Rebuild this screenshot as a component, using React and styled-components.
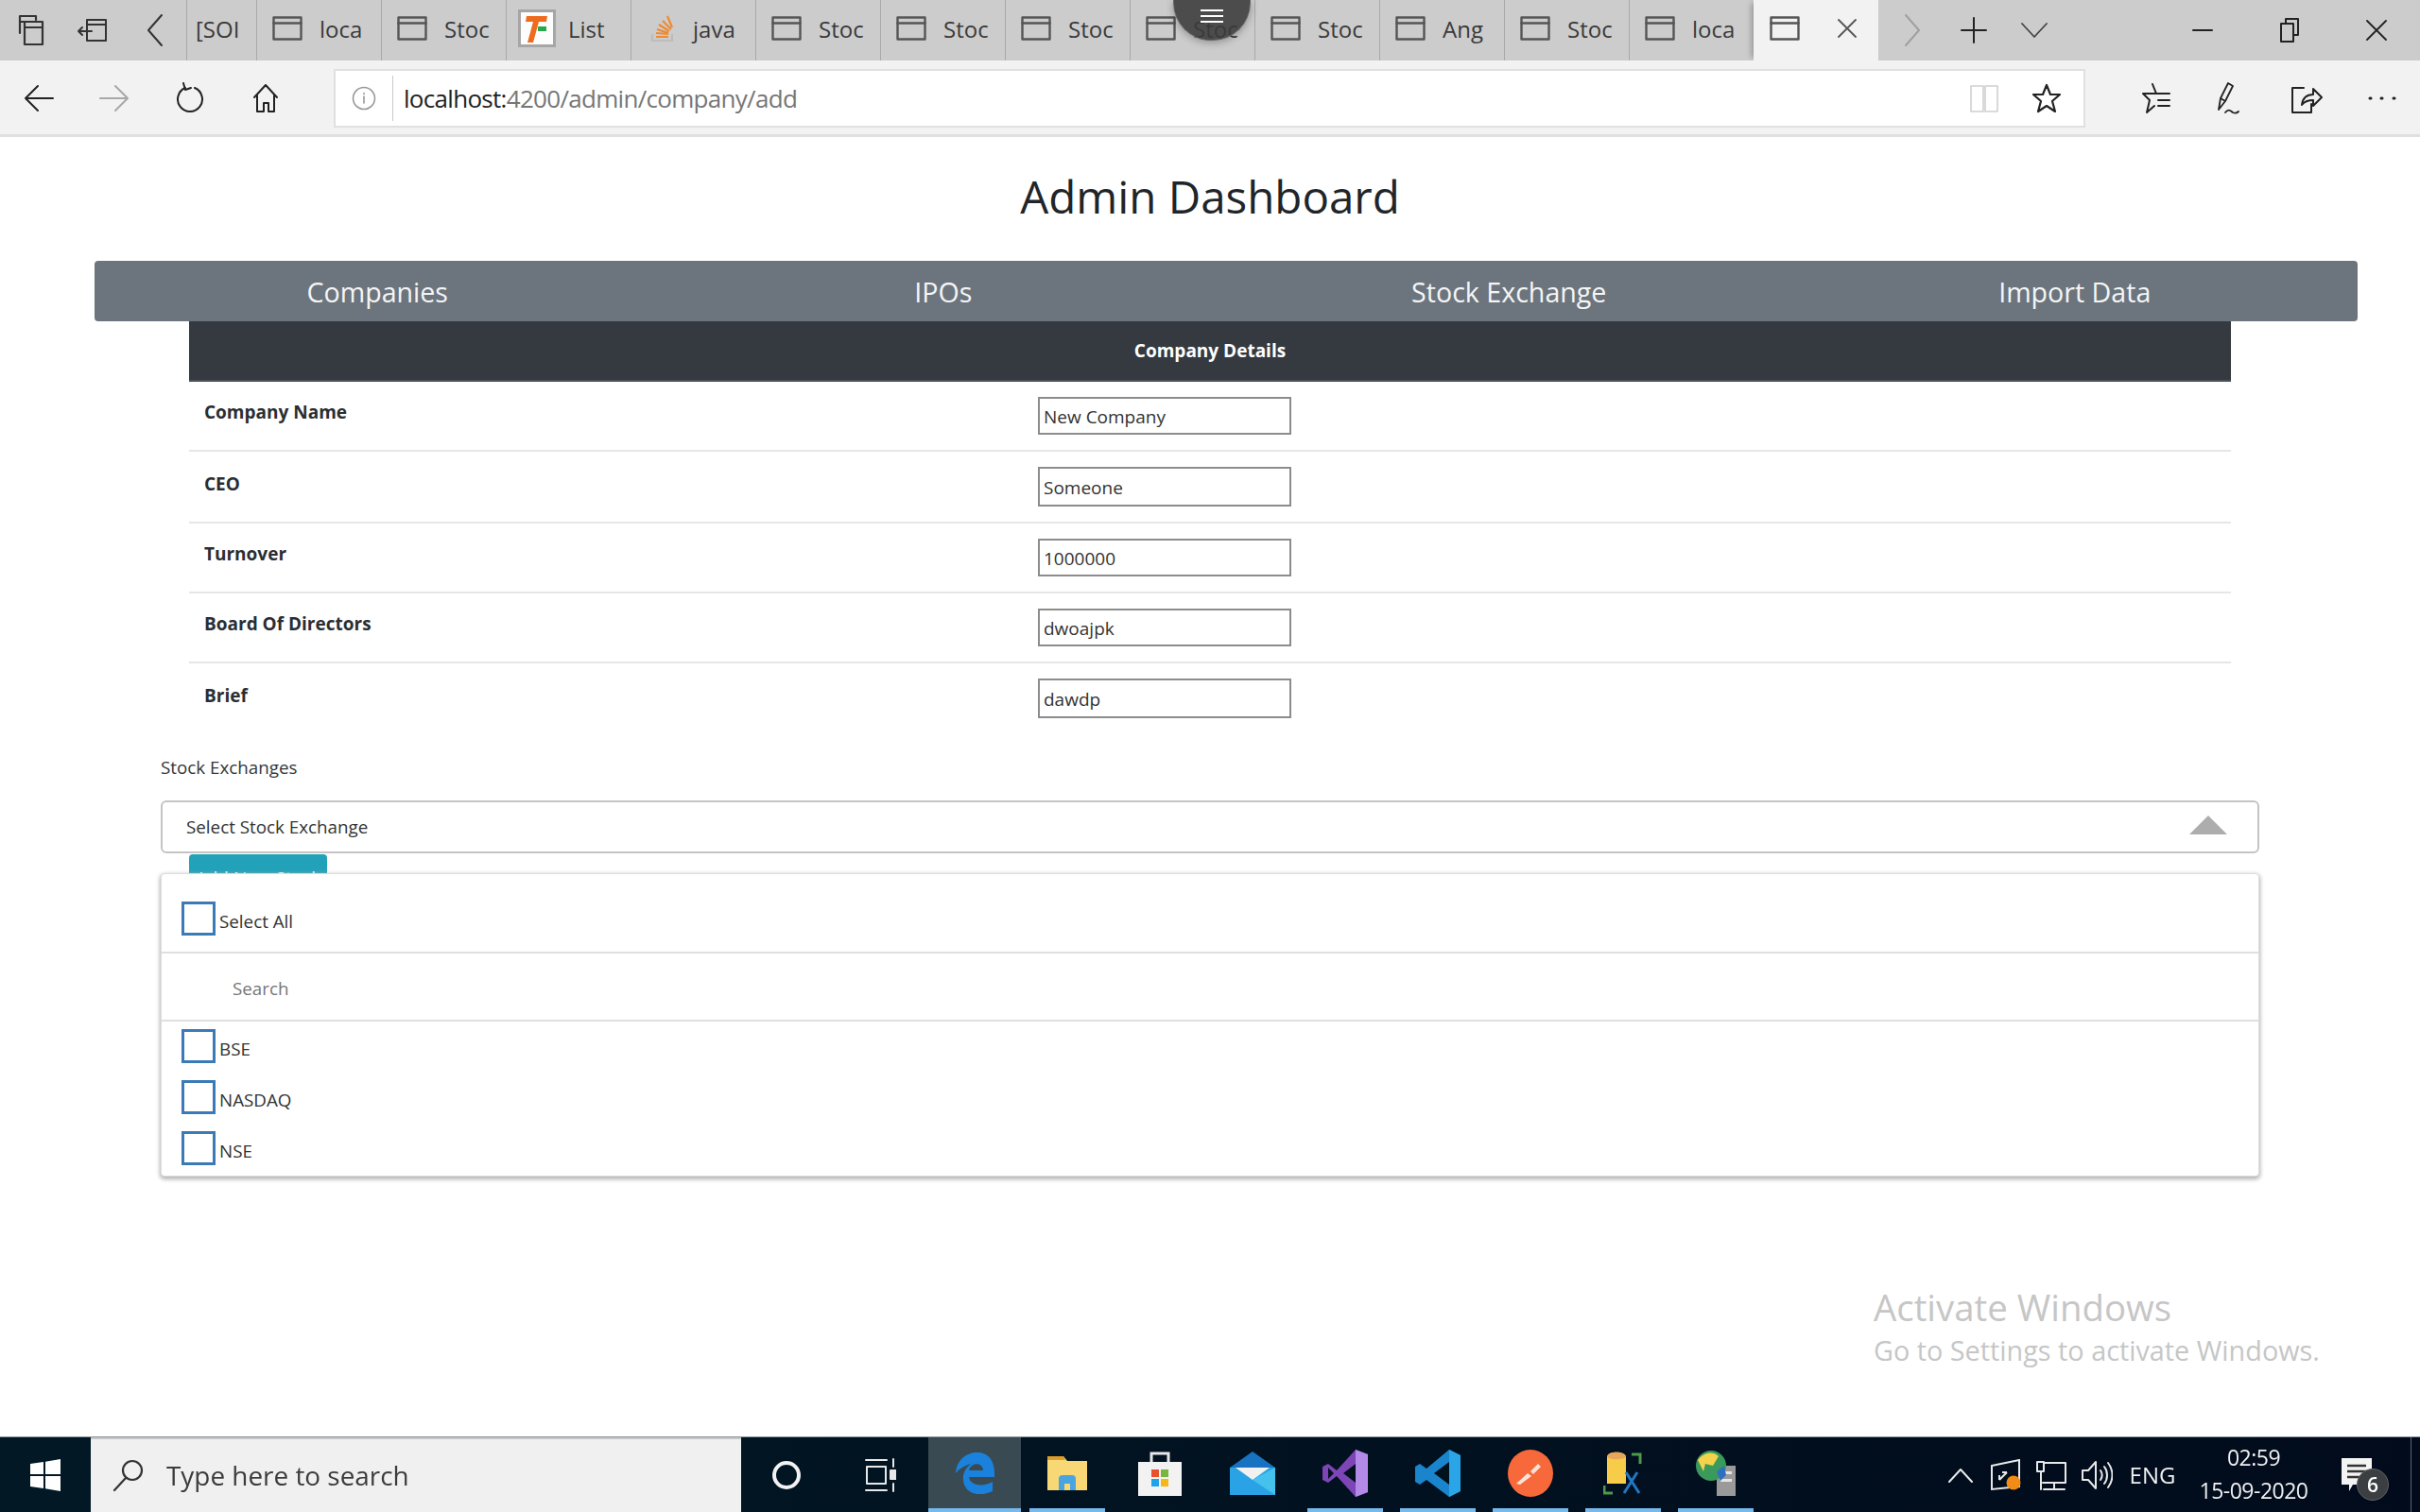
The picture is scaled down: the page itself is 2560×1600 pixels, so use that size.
import React from "react";
import styled, { createGlobalStyle } from "styled-components";

const GlobalStyle = createGlobalStyle`
  html, body {
    margin: 0;
    padding: 0;
    background: #fff;
    font-family: "Open Sans", "Liberation Sans", sans-serif;
  }
  * { box-sizing: border-box; }
`;

const Frame = styled.div`
  position: relative;
  width: 2560px;
  height: 1600px;
  display: flex;
  flex-direction: column;
  overflow: hidden;
  filter: blur(0.6px);
`;

/* browser chrome */
const TabBar = styled.div`
  height: 64px;
  flex: none;
  display: flex;
  background: #ccc;
  color: #333;
`;

const Slot = styled.div`
  width: ${(p) => p.$w}px;
  flex: none;
  display: flex;
  align-items: center;
  justify-content: center;
  color: ${(p) => p.$color || "inherit"};
`;

const Tab = styled.div`
  width: ${(p) => p.$w || 132}px;
  flex: none;
  display: flex;
  align-items: center;
  gap: ${(p) => p.$gap ?? 18}px;
  padding-left: ${(p) => p.$pad ?? 16}px;
  padding-bottom: 4px;
  border-left: 1px solid #a9a9a9;
  font-size: 24px;
  color: #3a3a3a;
  overflow: hidden;
`;

const ActiveTab = styled(Tab)`
  background: #f2f2f2;
  border-left: none;
  box-shadow: -5px 0 6px -3px rgba(0, 0, 0, 0.28);
`;

const TabSpacer = styled.div`
  flex: 1;
`;

const Toolbar = styled.div`
  height: 81px;
  flex: none;
  display: flex;
  align-items: center;
  padding: 2px 0 0 1px;
  background: #f2f2f2;
  border-bottom: 3px solid #e0e0e0;
  color: #2b2b2b;
`;

const AddressBar = styled.div`
  width: 1854px;
  height: 62px;
  margin-left: 32px;
  margin-right: 34px;
  display: flex;
  align-items: center;
  padding-right: 6px;
  background: #fff;
  border: 2px solid #e0e0e0;
  font-size: 26px;
  letter-spacing: -0.7px;
`;

const InfoDivider = styled.div`
  width: 1px;
  height: 48px;
  background: #c9c9c9;
  margin-right: 11px;
`;

const UrlHost = styled.span`
  color: #222;
`;

const UrlPath = styled.span`
  flex: 1;
  color: #767676;
`;

/* page */
const Page = styled.main`
  position: relative;
  flex: 1;
  min-height: 0;
  background: #fff;
  color: #212529;
`;

const Title = styled.h1`
  margin: 0 0 38px;
  padding-top: 33px;
  font-size: 47.5px;
  line-height: 60px;
  font-weight: 400;
  text-align: center;
`;

const NavBar = styled.nav`
  width: 2394px;
  height: 64px;
  margin-left: 100px;
  display: grid;
  grid-template-columns: repeat(4, 1fr);
  align-items: center;
  background: #6c757d;
  border-radius: 4px;
`;

const NavItem = styled.a`
  font-size: 28.6px;
  text-align: center;
  color: #f4f5f6;
`;

const DetailsTable = styled.section`
  width: 2160px;
  margin-left: 200px;
`;

const DetailsHead = styled.div`
  height: 64px;
  display: flex;
  align-items: center;
  justify-content: center;
  background: #343a40;
  border-bottom: 2px solid #4c5259;
  font-size: 19px;
  font-weight: 700;
  color: #fff;
`;

const DetailsRow = styled.div`
  height: ${(p) => p.$h}px;
  display: grid;
  grid-template-columns: 898px 1fr;
  padding-top: 16px;
  border-bottom: ${(p) => (p.$last ? "none" : "2px solid #e6e6e6")};
`;

const RowLabel = styled.div`
  padding-left: 16px;
  padding-top: ${(p) => p.$nudge || 0}px;
  font-size: 19px;
  line-height: 32px;
  font-weight: 700;
  color: #2a2e33;
`;

const TextField = styled.input`
  width: 268px;
  height: ${(p) => p.$h}px;
  padding: 2px 4px 0;
  background: #fff;
  border: 2px solid #8c8c8c;
  outline: none;
  font-family: inherit;
  font-size: 19px;
  color: #333;
`;

const ExchangeSection = styled.section`
  width: 2220px;
  margin: 19px 0 0 170px;
`;

const FieldLabel = styled.div`
  font-size: 18.8px;
  line-height: 26px;
  color: #33383c;
  margin-bottom: 22px;
`;

const SelectWrap = styled.div`
  position: relative;
`;

const SelectBox = styled.div`
  height: 56px;
  display: flex;
  align-items: center;
  justify-content: space-between;
  padding: 0 32px 0 25px;
  border: 2px solid #c4c4c4;
  border-radius: 6px;
  font-size: 18.8px;
  color: #333;
`;

const CaretUp = styled.span`
  width: 0;
  height: 0;
  border-left: 20px solid transparent;
  border-right: 20px solid transparent;
  border-bottom: 20px solid #adadad;
  margin-top: -4px;
`;

const AddStockButton = styled.button`
  display: block;
  width: 146px;
  height: 50px;
  margin: 1px 0 0 30px;
  padding: 0;
  border: none;
  border-radius: 4px;
  background: #22a2b8;
  color: #fff;
  font-family: inherit;
  font-size: 19px;
`;

const Dropdown = styled.div`
  position: absolute;
  top: 77px;
  left: 0;
  right: 0;
  height: 321px;
  background: #fff;
  border: 1px solid #dedede;
  border-radius: 4px;
  box-shadow: 0 2px 4px 1px #b4b4b4;
  font-size: 18.8px;
  color: #333;
`;

const SelectAllRow = styled.div`
  height: 84px;
  display: flex;
  align-items: flex-start;
  gap: 4px;
  padding: 29px 0 0 21px;
  border-bottom: 2px solid #dfdfdf;
`;

const SearchRow = styled.div`
  height: 72px;
  display: flex;
  align-items: center;
  padding: 3px 0 0 75px;
  border-bottom: 2px solid #dfdfdf;
  color: #777;
`;

const OptionList = styled.div`
  padding: 8px 0 0 21px;
`;

const OptionRow = styled.div`
  height: 54px;
  display: flex;
  align-items: flex-start;
  gap: 4px;
`;

const CheckBox = styled.span`
  width: 36px;
  height: 36px;
  flex: none;
  border: 3px solid #3b7ab5;
`;

const OptionText = styled.span`
  line-height: 36px;
  padding-top: 3px;
`;

const Watermark = styled.div`
  position: absolute;
  left: 1982px;
  top: 1210px;
  color: #c6c6c6;
  pointer-events: none;
`;

const WatermarkTitle = styled.div`
  font-size: 38.4px;
  line-height: 56px;
`;

const WatermarkHint = styled.div`
  font-size: 28.8px;
  line-height: 36px;
`;

/* taskbar */
const Taskbar = styled.footer`
  height: 80px;
  flex: none;
  display: flex;
  align-items: stretch;
  background: linear-gradient(90deg, #021925, #010b1c);
  border-top: 1px solid #8a9399;
  color: #f0f0f0;
`;

const SearchBox = styled.div`
  width: 688px;
  flex: none;
  display: flex;
  align-items: center;
  gap: 22px;
  padding-left: 22px;
  padding-bottom: 2px;
  background: #f0f0f0;
  border-top: 2px solid #c8c8c8;
  color: #3c3c3c;
  font-size: 27.9px;
`;

const AppTile = styled.div`
  position: relative;
  width: ${(p) => p.$w || 98}px;
  flex: none;
  display: flex;
  align-items: center;
  justify-content: center;
  padding-bottom: 3px;
  background: ${(p) => (p.$active ? "#3a4a52" : "transparent")};
  &::after {
    content: "";
    display: ${(p) => (p.$open ? "block" : "none")};
    position: absolute;
    bottom: 0;
    left: ${(p) => (p.$active ? 0 : 9)}px;
    right: ${(p) => (p.$active ? 0 : 9)}px;
    height: 4px;
    background: #76b9ed;
  }
`;

const Tray = styled.div`
  margin-left: auto;
  display: flex;
  align-items: stretch;
  width: 510px;
  font-size: 24px;
`;

const Clock = styled.div`
  width: 144px;
  display: flex;
  flex-direction: column;
  align-items: center;
  justify-content: center;
  gap: 4px;
  padding-bottom: 2px;
  font-size: 23px;
  line-height: 31px;
  letter-spacing: -0.5px;
`;

const NotifySlot = styled.div`
  position: relative;
  width: 74px;
  display: flex;
  align-items: center;
  justify-content: center;
`;

const NotifyBadge = styled.span`
  position: absolute;
  left: 37px;
  top: 33px;
  width: 34px;
  height: 34px;
  display: flex;
  align-items: center;
  justify-content: center;
  border-radius: 50%;
  background: #3c3f42;
  border: 1px solid #5f6265;
  color: #fff;
  font-size: 21px;
  font-weight: 600;
`;

const ShowDesktop = styled.div`
  width: 10px;
  margin-left: 20px;
  border-left: 1px solid #5a6670;
`;

const ScreenHandle = styled.div`
  position: absolute;
  top: 0;
  left: 1241px;
  width: 82px;
  height: 43px;
  display: flex;
  flex-direction: column;
  align-items: center;
  justify-content: center;
  gap: 4px;
  padding-bottom: 8px;
  background: rgba(58, 58, 58, 0.88);
  border: 1px solid #666;
  border-top: none;
  border-radius: 0 0 40px 40px;
  box-shadow: 0 2px 8px rgba(0, 0, 0, 0.3);
`;

const HandleLine = styled.span`
  width: 24px;
  height: 2px;
  background: #fff;
`;

const Icon = ({ w = 32, h = 32, sw = 2, children, color }) => (
  <svg
    width={w}
    height={h}
    viewBox={`0 0 ${w} ${h}`}
    fill="none"
    stroke={color || "currentColor"}
    strokeWidth={sw}
    strokeLinecap="round"
    strokeLinejoin="round"
  >
    {children}
  </svg>
);

const TabPage = () => (
  <Icon w={32} h={26} sw={2.4} color="#555">
    <rect x="1.5" y="1.5" width="29" height="23" />
    <path d="M1.5 7.5h29" />
  </Icon>
);

const TabsAside = () => (
  <Icon w={30} h={34} sw={2.2} color="#333">
    <path d="M3 20V2h17v4M3 8h17" />
    <rect x="8" y="8" width="19" height="24" fill="#ccc" />
    <path d="M8 14h19" />
  </Icon>
);

const SetAside = () => (
  <Icon w={34} h={28} sw={2} color="#333">
    <rect x="11" y="3" width="20" height="22" />
    <path d="M11 8h20M2 15h14M6 11l-4 4 4 4" />
  </Icon>
);

const TinyChevron = ({ flip, color }) => (
  <Icon w={18} h={36} sw={2} color={color || "#333"}>
    <path d={flip ? "M2 2l14 16L2 34" : "M16 2L2 18l14 16"} />
  </Icon>
);

const CrossIcon = ({ size = 20, color = "#333" }) => (
  <Icon w={size} h={size} sw={1.8} color={color}>
    <path d={`M1 1L${size - 1} ${size - 1}M${size - 1} 1L1 ${size - 1}`} />
  </Icon>
);

const FaviconF = () => (
  <svg width="40" height="40" viewBox="0 0 40 40">
    <rect x="1.5" y="1.5" width="37" height="37" fill="#fdfdfd" stroke="#a6a6a6" strokeWidth="3" />
    <path d="M9 7h22l-1 6h-8l-6 22h-6l6-22H8z" fill="#ef6c1e" />
    <rect x="21" y="18" width="9" height="5" fill="#27a84a" />
  </svg>
);

const FaviconStack = () => (
  <svg width="26" height="30" viewBox="0 0 26 30" fill="none" strokeWidth="2.2">
    <path d="M2 21v7h21v-7" stroke="#bcbcbc" />
    <path d="M6 24h13M6 20l13 1M7 16l12 4M9 11l11 7M13 7l9 9M18 2l5 12" stroke="#ee8a33" />
  </svg>
);

const WinLogo = () => (
  <svg width="32" height="34" viewBox="0 0 32 34" fill="#fff">
    <path d="M0 5l14-2v13H0zM16 2.700L32 0v16H16zM0 18h14v13L0 29zM16 18h16v16l-16-2.700z" />
  </svg>
);

const EdgeLogo = () => (
  <svg width="48" height="48" viewBox="0 0 48 48">
    <path d="M4 24C5 10 15 2 27 2c11 0 18 8 18 22v4H18c1 9 15 11 25 5v10c-12 6-30 4-31-12-1-7 3-13 8-17-7 2-12 5-16 10zm14-3h15c0-9-13-9-15 0z" fill="#1a82dc" />
  </svg>
);

const FolderLogo = () => (
  <svg width="48" height="48" viewBox="0 0 48 48">
    <path d="M3 6h17l4 5h21v31H3z" fill="#f8d775" />
    <path d="M3 6h17l2 4H3z" fill="#dc9d2c" />
    <path d="M15 42V30a4 4 0 0 1 4-4h10a4 4 0 0 1 4 4v12h-6v-7h-6v7z" fill="#4aa4e0" />
  </svg>
);

const StoreLogo = () => (
  <svg width="48" height="48" viewBox="0 0 48 48">
    <path d="M15 12V3h18v9" fill="none" stroke="#e8e8e8" strokeWidth="3" />
    <rect x="1" y="12" width="46" height="36" fill="#f2f2f2" />
    <rect x="15" y="20" width="8" height="8" fill="#e9502e" />
    <rect x="25" y="20" width="8" height="8" fill="#79b640" />
    <rect x="15" y="30" width="8" height="8" fill="#1fa3e8" />
    <rect x="25" y="30" width="8" height="8" fill="#f9b618" />
  </svg>
);

const MailLogo = () => (
  <svg width="48" height="48" viewBox="0 0 48 48">
    <path d="M0 18L24 1l24 17v29H0z" fill="#1773c2" />
    <path d="M0 18h48v29H0z" fill="#2aa3e6" />
    <path d="M6 18h36L24 31z" fill="#f1f1f1" />
    <path d="M24 31l24-13v29z" fill="#45c1ee" />
  </svg>
);

const VsLogo = () => (
  <svg width="48" height="50" viewBox="0 0 48 50">
    <path d="M35 0l13 5v40l-13 5-20-22-9 7-6-3V18l6-3 9 7z" fill="#7d45b6" />
    <path d="M35 0l13 5v40l-13 5z" fill="#b48ae8" />
    <path d="M6 19v12l6-6zM22 25l13 10V15z" fill="#02121d" />
  </svg>
);

const VsCodeLogo = () => (
  <svg width="48" height="50" viewBox="0 0 48 50">
    <path d="M36 0l12 6v38l-12 6-24-18-7 5-5-3V18l5-3 7 5z" fill="#1a85cc" />
    <path d="M36 0l12 6v38l-12 6z" fill="#2aa6e8" />
    <path d="M20 25l16 12V13z" fill="#02121d" />
  </svg>
);

const PostmanLogo = () => (
  <svg width="48" height="50" viewBox="0 0 48 50">
    <ellipse cx="24" cy="25" rx="24" ry="25" fill="#f7693a" />
    <path d="M9 36l12-11 4 3-12 9zM24 23l8-8 3 3-8 8z" fill="#fbe3d8" />
  </svg>
);

const DbToolLogo = () => (
  <svg width="42" height="46" viewBox="0 0 42 46" fill="none">
    <path d="M4 6c0-7 20-7 20 0v28H4z" fill="#f6cc48" />
    <path d="M4 6c0-7 20-7 20 0-5 3-15 3-20 0z" fill="#e8a65a" />
    <path d="M30 3h9v10M1 36v8h9" stroke="#4c9a4a" strokeWidth="3" />
    <path d="M22 44l14-22M38 44L24 22" stroke="#1f78c4" strokeWidth="3" />
  </svg>
);

const ServerLogo = () => (
  <svg width="46" height="48" viewBox="0 0 46 48">
    <rect x="24" y="16" width="20" height="32" fill="#9a9a9a" />
    <rect x="28" y="22" width="12" height="3" fill="#e5e5e5" />
    <rect x="28" y="30" width="12" height="3" fill="#e5e5e5" />
    <circle cx="18" cy="16" r="16" fill="#3a9a5c" />
    <path d="M4 10c6-8 16-10 22-4l-6 10-8-2-2 8z" fill="#f3d24c" />
    <path d="M24 22l8-6 2 10-6 6z" fill="#2f6fc2" />
  </svg>
);

const tabs = [
  { title: "loca" },
  { title: "Stoc" },
  { title: "List", icon: <FaviconF />, gap: 13, pad: 12 },
  { title: "java", icon: <FaviconStack />, gap: 19, pad: 20 },
  { title: "Stoc" },
  { title: "Stoc" },
  { title: "Stoc" },
  { title: "Stoc" },
  { title: "Stoc" },
  { title: "Ang" },
  { title: "Stoc" },
  { title: "loca" },
];

const fields = [
  { label: "Company Name", value: "New Company", h: 74, inputH: 40 },
  { label: "CEO", value: "Someone", h: 76, inputH: 42, nudge: 2 },
  { label: "Turnover", value: "1000000", h: 74, inputH: 40 },
  { label: "Board Of Directors", value: "dwoajpk", h: 74, inputH: 40 },
  { label: "Brief", value: "dawdp", h: 78, inputH: 42, nudge: 2, last: true },
];

const navItems = ["Companies", "IPOs", "Stock Exchange", "Import Data"];
const exchanges = ["BSE", "NASDAQ", "NSE"];

const apps = [
  { key: "edge", logo: <EdgeLogo />, open: true, active: true },
  { key: "folder", logo: <FolderLogo />, open: true },
  { key: "store", logo: <StoreLogo /> },
  { key: "mail", logo: <MailLogo /> },
  { key: "vs", logo: <VsLogo />, open: true },
  { key: "vscode", logo: <VsCodeLogo />, open: true },
  { key: "postman", logo: <PostmanLogo />, open: true },
  { key: "db", logo: <DbToolLogo />, open: true },
  { key: "server", logo: <ServerLogo />, open: true },
];

function App() {
  return (
    <Frame>
      <GlobalStyle />
      <TabBar>
        <Slot $w={65}><TabsAside /></Slot>
        <Slot $w={65}><SetAside /></Slot>
        <Slot $w={67}><TinyChevron /></Slot>
        <Tab $w={74} $pad={9}>[SOI</Tab>
        {tabs.map((tab, i) => (
          <Tab key={i} $gap={tab.gap} $pad={tab.pad}>
            {tab.icon || <TabPage />}
            <span>{tab.title}</span>
          </Tab>
        ))}
        <ActiveTab $w={132} $gap={40} $pad={17}>
          <TabPage />
          <CrossIcon size={20} color="#555" />
        </ActiveTab>
        <Slot $w={72}><TinyChevron flip color="#a0a0a0" /></Slot>
        <Slot $w={58}>
          <Icon w={28} h={28} sw={2} color="#222"><path d="M14 1v26M1 14h26" /></Icon>
        </Slot>
        <Slot $w={70}>
          <Icon w={28} h={16} sw={1.8} color="#444"><path d="M1 1l13 14L27 1" /></Icon>
        </Slot>
        <TabSpacer />
        <Slot $w={92}>
          <Icon w={22} h={4} sw={2} color="#222"><path d="M1 2h20" /></Icon>
        </Slot>
        <Slot $w={92}>
          <Icon w={20} h={26} sw={2} color="#222">
            <path d="M6 5V1h13v17h-5" />
            <rect x="1" y="6" width="13" height="19" />
          </Icon>
        </Slot>
        <Slot $w={92}><CrossIcon size={22} color="#222" /></Slot>
      </TabBar>

      <Toolbar>
        <Slot $w={80}>
          <Icon w={32} h={30} sw={2} color="#222"><path d="M2 15h29M15 2L2 15l13 13" /></Icon>
        </Slot>
        <Slot $w={80}>
          <Icon w={32} h={30} sw={2} color="#a8a8a8"><path d="M1 15h29M17 2l13 13-13 13" /></Icon>
        </Slot>
        <Slot $w={80}>
          <Icon w={30} h={34} sw={2} color="#222">
            <path d="M10 6a13 13 0 1 0 10 0" />
            <path d="M8 1l2 7 6-2" />
          </Icon>
        </Slot>
        <Slot $w={80}>
          <Icon w={28} h={32} sw={2} color="#222">
            <path d="M2 15L14 2l12 13M5 13v17h7v-9h5v9h6V13" />
          </Icon>
        </Slot>
        <AddressBar>
          <Slot $w={60}>
            <Icon w={26} h={26} sw={1.6} color="#999">
              <circle cx="13" cy="13" r="11.500" />
              <path d="M13 11v7M13 7.500v1" />
            </Icon>
          </Slot>
          <InfoDivider />
          <UrlHost>localhost:</UrlHost>
          <UrlPath>4200/admin/company/add</UrlPath>
          <Slot $w={66}>
            <Icon w={30} h={32} sw={1.6} color="#d0d0d0">
              <path d="M1 3h13v27H1zM16 3h13v27H16z" />
            </Icon>
          </Slot>
          <Slot $w={66}>
            <Icon w={32} h={32} sw={2.200} color="#222">
              <path d="M16 2l4 10h10l-8 7 3 11-9-6-9 6 3-11-8-7h10z" />
            </Icon>
          </Slot>
        </AddressBar>
        <Slot $w={80}>
          <Icon w={34} h={34} sw={2} color="#222">
            <path d="M14 2l4 10h-14l7 7-3 13 8-7" />
            <path d="M18 12h14M20 19h12M20 25h12" />
          </Icon>
        </Slot>
        <Slot $w={80}>
          <Icon w={32} h={36} sw={1.800} color="#222">
            <path d="M3 30L5 18 13 2l5 3-8 16zM5 18l5 3M10 33c4-5 6-1 8 0s4 1 6-1" />
          </Icon>
        </Slot>
        <Slot $w={80}>
          <Icon w={34} h={34} sw={2} color="#222">
            <path d="M14 6H2v26h20v-9M12 24c1-8 6-11 12-11V7l9 9-9 9v-6c-5 0-9 1-12 5z" />
          </Icon>
        </Slot>
        <Slot $w={80}>
          <Icon w={30} h={4} sw={3} color="#222"><path d="M2 2h1M14 2h1M27 2h1" /></Icon>
        </Slot>
      </Toolbar>

      <Page>
        <Title>Admin Dashboard</Title>
        <NavBar>
          {navItems.map((item) => (
            <NavItem key={item}>{item}</NavItem>
          ))}
        </NavBar>
        <DetailsTable>
          <DetailsHead>Company Details</DetailsHead>
          {fields.map((f) => (
            <DetailsRow key={f.label} $h={f.h} $last={f.last}>
              <RowLabel $nudge={f.nudge}>{f.label}</RowLabel>
              <div>
                <TextField readOnly value={f.value} $h={f.inputH} />
              </div>
            </DetailsRow>
          ))}
        </DetailsTable>
        <ExchangeSection>
          <FieldLabel>Stock Exchanges</FieldLabel>
          <SelectWrap>
            <SelectBox>
              <span>Select Stock Exchange</span>
              <CaretUp />
            </SelectBox>
            <AddStockButton>Add New Stock</AddStockButton>
            <Dropdown>
              <SelectAllRow>
                <CheckBox />
                <OptionText>Select All</OptionText>
              </SelectAllRow>
              <SearchRow>Search</SearchRow>
              <OptionList>
                {exchanges.map((name) => (
                  <OptionRow key={name}>
                    <CheckBox />
                    <OptionText>{name}</OptionText>
                  </OptionRow>
                ))}
              </OptionList>
            </Dropdown>
          </SelectWrap>
        </ExchangeSection>
        <Watermark>
          <WatermarkTitle>Activate Windows</WatermarkTitle>
          <WatermarkHint>Go to Settings to activate Windows.</WatermarkHint>
        </Watermark>
      </Page>

      <Taskbar>
        <Slot $w={96}><WinLogo /></Slot>
        <SearchBox>
          <Icon w={36} h={36} sw={2.200} color="#333">
            <circle cx="22" cy="13" r="10" />
            <path d="M15 21L3 34" />
          </Icon>
          <span>Type here to search</span>
        </SearchBox>
        <Slot $w={96}>
          <Icon w={32} h={32} sw={4} color="#f2f2f2"><circle cx="16" cy="16" r="13" /></Icon>
        </Slot>
        <Slot $w={102}>
          <Icon w={34} h={38} sw={2} color="#e8e8e8">
            <path d="M2 3h22M2 35h22M3 10h20v18H3zM31 2v8M31 28v8" />
            <rect x="28" y="14" width="6" height="9" fill="#e8e8e8" />
          </Icon>
        </Slot>
        {apps.map((app) => (
          <AppTile key={app.key} $open={app.open} $active={app.active}>
            {app.logo}
          </AppTile>
        ))}
        <Tray>
          <Slot $w={48}>
            <Icon w={26} h={16} sw={2} color="#e8e8e8"><path d="M1 15L13 2l12 13" /></Icon>
          </Slot>
          <Slot $w={48}>
            <svg width="34" height="34" viewBox="0 0 34 34" fill="none" stroke="#e8e8e8" strokeWidth="2">
              <path d="M2 7l29-6v28l-29 3z" />
              <path d="M10 22l8-8M18 14h-5M10 22v-5" />
              <circle cx="25" cy="25" r="7.500" fill="#f28c16" stroke="none" />
            </svg>
          </Slot>
          <Slot $w={48}>
            <Icon w={34} h={34} sw={2} color="#e8e8e8">
              <path d="M9 4h23v21H8M20 25v6M9 32h22M6 13v19" />
              <rect x="2" y="3" width="7" height="10" />
            </Icon>
          </Slot>
          <Slot $w={48}>
            <Icon w={34} h={34} sw={2} color="#e8e8e8">
              <path d="M2 12h6l8-9v28l-8-9H2zM21 12c2 3 2 7 0 10M25 8c4 5 4 13 0 18M29 4c6 8 6 18 0 26" />
            </Icon>
          </Slot>
          <Slot $w={70}>ENG</Slot>
          <Clock>
            <span>02:59</span>
            <span>15-09-2020</span>
          </Clock>
          <NotifySlot>
            <svg width="34" height="38" viewBox="0 0 34 38">
              <path d="M1 1h32v28H13l-4 7v-7H1z" fill="#f4f4f4" />
              <path d="M7 9h20M7 15h20M7 21h14" stroke="#333" strokeWidth="2.500" />
            </svg>
            <NotifyBadge>6</NotifyBadge>
          </NotifySlot>
          <ShowDesktop />
        </Tray>
      </Taskbar>

      <ScreenHandle>
        <HandleLine />
        <HandleLine />
        <HandleLine />
      </ScreenHandle>
    </Frame>
  );
}

export default App;
